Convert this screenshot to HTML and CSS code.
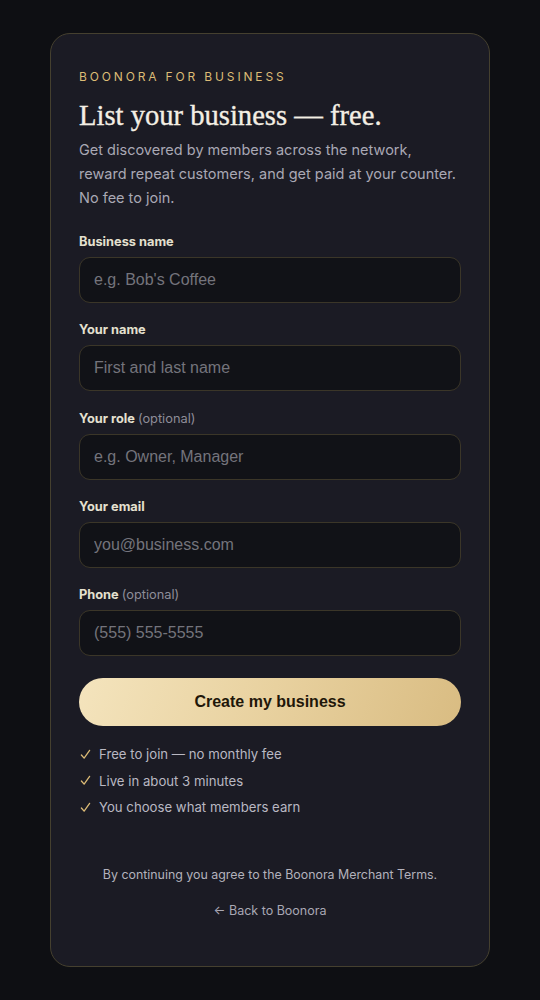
FILE: index.html
```html
<!DOCTYPE html>
<html lang="en">
<head>
<meta charset="utf-8">
<title>Boonora for Business</title>
<link rel="stylesheet" href="styles.css">
</head>
<body>
<main class="card">
  <div class="eyebrow">BOONORA FOR BUSINESS</div>
  <h1 class="title">List your business — free.</h1>
  <p class="lede">Get discovered by members across the network, reward repeat customers, and get paid at your counter. No fee to join.</p>
  <form class="form">
    <label class="field">
      <span class="label">Business name</span>
      <input class="input" type="text" placeholder="e.g. Bob's Coffee">
    </label>
    <label class="field">
      <span class="label">Your name</span>
      <input class="input" type="text" placeholder="First and last name">
    </label>
    <label class="field">
      <span class="label">Your role <span class="opt">(optional)</span></span>
      <input class="input" type="text" placeholder="e.g. Owner, Manager">
    </label>
    <label class="field">
      <span class="label">Your email</span>
      <input class="input" type="email" placeholder="you@business.com">
    </label>
    <label class="field">
      <span class="label">Phone <span class="opt">(optional)</span></span>
      <input class="input" type="tel" placeholder="(555) 555-5555">
    </label>
    <button class="submit" type="button">Create my business</button>
  </form>
  <ul class="checks">
    <li><svg class="tick" viewBox="0 0 12 12" aria-hidden="true"><polyline points="1.5,6.5 4.5,10 10.5,1.5"/></svg>Free to join — no monthly fee</li>
    <li><svg class="tick" viewBox="0 0 12 12" aria-hidden="true"><polyline points="1.5,6.5 4.5,10 10.5,1.5"/></svg>Live in about 3 minutes</li>
    <li><svg class="tick" viewBox="0 0 12 12" aria-hidden="true"><polyline points="1.5,6.5 4.5,10 10.5,1.5"/></svg>You choose what members earn</li>
  </ul>
  <p class="terms">By continuing you agree to the Boonora Merchant Terms.</p>
  <a class="back" href="#">← Back to Boonora</a>
</main>
</body>
</html>
```
FILE: styles.css
```css
* { box-sizing: border-box; }
html, body { margin: 0; padding: 0; }
body {
  background: #0e0f13;
  font-family: Inter, "Noto Sans", sans-serif;
  padding: 33px 50px 34px;
  min-height: 1000px;
}
.card {
  background: #1b1b24;
  border: 1px solid #45402f;
  border-radius: 20px;
  padding: 35px 28px 46px;
  display: flex;
  flex-direction: column;
}
.eyebrow {
  color: #dcbb76;
  font-size: 12px;
  line-height: 16px;
  letter-spacing: 2.85px;
}
.title {
  margin: 14px 0 0;
  font-family: "Liberation Serif", serif;
  font-weight: 400;
  font-size: 28.6px;
  line-height: 34px;
  color: #f4efe4;
  -webkit-text-stroke: 0.35px #f4efe4;
}
.lede {
  margin: 5px 0 0;
  font-size: 14.5px;
  line-height: 24px;
  color: #a9a8b4;
}
.form {
  margin-top: 23px;
  display: flex;
  flex-direction: column;
  gap: 18.3px;
}
.field {
  display: flex;
  flex-direction: column;
  gap: 6px;
}
.label {
  font-size: 12.8px;
  line-height: 18px;
  font-weight: 700;
  color: #e4e0cf;
}
.opt {
  font-weight: 400;
  color: #8e8d98;
}
.input {
  height: 46px;
  background: #111217;
  border: 1px solid #3b3628;
  border-radius: 11px;
  padding: 0 14px;
  font-family: "Liberation Sans", Arial, sans-serif;
  font-size: 16px;
  color: #e4e0cf;
  outline: none;
}
.input::placeholder { color: #74747c; }
.submit {
  margin-top: 4px;
  height: 48px;
  border: none;
  border-radius: 24px;
  background: linear-gradient(110deg, #f4e4bd 0%, #e8d19f 50%, #d9bc82 100%);
  font-family: "Liberation Sans", Arial, sans-serif;
  font-weight: 700;
  font-size: 16px;
  color: #1f1709;
}
.checks {
  list-style: none;
  margin: 18px 0 0;
  padding: 0;
  display: flex;
  flex-direction: column;
  gap: 6.5px;
}
.checks li {
  font-size: 13.2px;
  line-height: 20px;
  color: #b9b8c2;
  display: flex;
  align-items: center;
}
.tick {
  width: 11px;
  height: 11px;
  margin: 0 8px 0 1px;
  fill: none;
  stroke: #dcbb76;
  stroke-width: 1.4;
  stroke-linecap: round;
  stroke-linejoin: round;
}
.terms {
  margin: 49px 0 0;
  text-align: center;
  font-size: 12.4px;
  line-height: 18px;
  color: #b3b2bc;
}
.back {
  margin-top: 18px;
  align-self: center;
  font-size: 12.5px;
  line-height: 18px;
  color: #a9a8b4;
  text-decoration: none;
}
```
